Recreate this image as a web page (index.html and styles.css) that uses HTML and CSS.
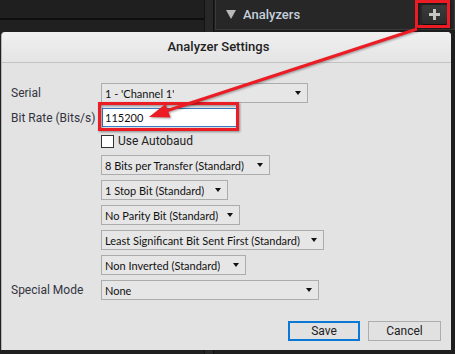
FILE: index.html
```html
<!DOCTYPE html>
<html lang="en">

<head>
    <meta charset="UTF-8">
    <meta name="viewport" content="width=device-width, initial-scale=1.0">
    <title>Analyzer Settings</title>
    <link rel="stylesheet" href="styles.css">
</head>

<body>
    <!-- 背景里的主程序窗口 -->
    <div class="app">
        <div class="workspace">
            <div class="workspace-bar"></div>
            <div class="workspace-body"></div>
        </div>
        <div class="splitter"></div>
        <div class="sidebar">
            <div class="panel-head">
                <span class="caret"></span>
                <span class="panel-title">Analyzers</span>
                <button class="add-btn">
                    <svg width="11" height="11" viewBox="0 0 11 11"><path d="M4 0h3v4h4v3H7v4H4V7H0V4h4z" fill="#c4c4c4"/></svg>
                </button>
            </div>
            <div class="sidebar-body"></div>
        </div>
    </div>

    <!-- 弹出的设置框 -->
    <div class="dialog">
        <div class="dialog-title">Analyzer Settings</div>

        <div class="dialog-body">
            <label class="field-label">Serial</label>
            <div class="combo combo-serial"><span>1 - 'Channel 1'</span><i class="combo-arrow"></i></div>

            <label class="field-label">Bit Rate (Bits/s)</label>
            <input type="text" value="115200" class="rate-ipt">

            <label class="check-row"><span class="check-box"></span>Use Autobaud</label>

            <div class="combo combo-bits"><span>8 Bits per Transfer (Standard)</span><i class="combo-arrow"></i></div>
            <div class="combo combo-stop"><span>1 Stop Bit (Standard)</span><i class="combo-arrow"></i></div>
            <div class="combo combo-parity"><span>No Parity Bit (Standard)</span><i class="combo-arrow"></i></div>
            <div class="combo combo-order"><span>Least Significant Bit Sent First (Standard)</span><i class="combo-arrow"></i></div>
            <div class="combo combo-invert"><span>Non Inverted (Standard)</span><i class="combo-arrow"></i></div>

            <label class="field-label">Special Mode</label>
            <div class="combo combo-mode"><span>None</span><i class="combo-arrow"></i></div>
        </div>

        <div class="dialog-foot">
            <button class="btn btn-save">Save</button>
            <button class="btn">Cancel</button>
        </div>
    </div>

    <!-- 截图上的红色标注 -->
    <div class="mark mark-add"></div>
    <div class="mark mark-rate"></div>
    <svg class="pointer" width="455" height="354" viewBox="0 0 455 354">
        <line x1="417" y1="29" x2="166" y2="111" stroke="#ec1c24" stroke-width="3"/>
        <polygon points="149,117 165.5,104 170.5,117.5" fill="#ec1c24"/>
    </svg>
</body>

</html>
```

FILE: styles.css
```css
* {
    margin: 0;
    padding: 0;
    box-sizing: border-box;
}

body {
    width: 455px;
    height: 354px;
    overflow: hidden;
    position: relative;
    background: #1c1c1c;
    font-family: Roboto, "Liberation Sans", sans-serif;
}

button {
    font-family: inherit;
    outline: none;
}

/* 背景程序 */
.app {
    display: flex;
    height: 100%;
}

.workspace {
    width: 204px;
    display: flex;
    flex-direction: column;
}

.workspace-bar {
    height: 20px;
    background: #1f1f1f;
    border-bottom: 2px solid #0e0e0e;
}

.workspace-body {
    flex: 1;
    background: #202020;
}

.splitter {
    width: 10px;
    background: #282828;
    border-left: 1px solid #121212;
    border-right: 1px solid #111;
}

.sidebar {
    flex: 1;
    display: flex;
    flex-direction: column;
    padding-left: 1px;
    background: #1e1e1e;
}

.panel-head {
    height: 30px;
    display: flex;
    align-items: center;
    padding: 0 7px 0 10px;
    background: #272727;
    border: 1px solid #3a3a3a;
    border-top: none;
}

.caret {
    width: 0;
    height: 0;
    border-left: 5px solid transparent;
    border-right: 5px solid transparent;
    border-top: 9px solid #b9b9b9;
    margin-right: 7px;
}

.panel-title {
    color: #c5d0dc;
    font-size: 13px;
    font-weight: 500;
}

.add-btn {
    margin-left: auto;
    width: 25px;
    height: 19px;
    display: flex;
    align-items: center;
    justify-content: center;
    background: linear-gradient(#3b3b3b, #2c2c2c);
    border: none;
    border-radius: 2px;
    box-shadow: 0 1px 0 #111;
}

.sidebar-body {
    flex: 1;
}

/* 设置框 */
.dialog {
    position: absolute;
    left: 1px;
    top: 32px;
    width: 450px;
    height: 318px;
    display: flex;
    flex-direction: column;
    background: #e3e3e3;
    border-radius: 4px 4px 0 0;
    border-left: 1px solid #b5b5b5;
}

.dialog-title {
    height: 31px;
    line-height: 30px;
    text-align: center;
    padding-right: 16px;
    font-size: 13px;
    font-weight: 500;
    color: #222;
    background: linear-gradient(#f0f0f0, #e4e4e4);
    border-bottom: 1px solid #c3c3c3;
    border-radius: 4px 4px 0 0;
}

.dialog-body {
    display: grid;
    grid-template-columns: 90px auto;
    justify-items: start;
    align-items: center;
    row-gap: 5px;
    padding: 20px 0 0 9px;
}

.field-label {
    grid-column: 1;
    font-size: 12px;
    color: #33343f;
}

.combo,
.rate-ipt,
.check-row {
    grid-column: 2;
}

.combo {
    height: 20px;
    display: flex;
    align-items: center;
    padding: 0 6px 0 3px;
    background: #e6e6e6;
    border: 1px solid #acacac;
    font-family: Lato, "Open Sans", sans-serif;
    font-size: 11px;
    color: #111;
    white-space: nowrap;
}

.combo span {
    min-width: 0;
    overflow: hidden;
}

.combo-arrow {
    flex-shrink: 0;
    width: 0;
    height: 0;
    margin-left: auto;
    border-left: 3px solid transparent;
    border-right: 3px solid transparent;
    border-top: 4px solid #111;
}

.combo-serial {
    width: 207px;
}

.combo-bits {
    width: 169px;
}

.combo-stop {
    width: 127px;
}

.combo-parity {
    width: 139px;
}

.combo-order {
    width: 223px;
}

.combo-invert {
    width: 145px;
}

.combo-mode {
    width: 218px;
}

.rate-ipt {
    width: 135px;
    height: 19px;
    margin-left: 1px;
    padding: 0 2px;
    border: 1px solid #3a79c4;
    background: #fff;
    outline: none;
    font-family: Lato, "Open Sans", sans-serif;
    font-size: 11px;
    color: #111;
}

.check-row {
    height: 18px;
    display: flex;
    align-items: center;
    font-size: 12px;
    color: #222;
}

.check-box {
    width: 13px;
    height: 13px;
    margin: 1px 4px 0 0;
    background: #fff;
    border: 1px solid #333;
}

.dialog-foot {
    margin-top: auto;
    display: flex;
    justify-content: flex-end;
    gap: 8px;
    padding: 0 10px 9px 0;
}

.btn {
    width: 73px;
    height: 20px;
    font-size: 12px;
    color: #222;
    background: #e1e1e1;
    border: 1px solid #adadad;
}

.btn-save {
    width: 72px;
    border: 2px solid #0b78d6;
}

/* 红色标注 */
.mark {
    position: absolute;
    border: 3px solid #ec1c24;
    filter: drop-shadow(1px 1px 1px rgba(0, 0, 0, 0.4));
}

.mark-add {
    left: 415px;
    top: 0;
    width: 35px;
    height: 28px;
}

.mark-rate {
    left: 98px;
    top: 102px;
    width: 141px;
    height: 29px;
}

.pointer {
    position: absolute;
    left: 0;
    top: 0;
    pointer-events: none;
    filter: drop-shadow(1px 1px 1px rgba(0, 0, 0, 0.35));
}
```
